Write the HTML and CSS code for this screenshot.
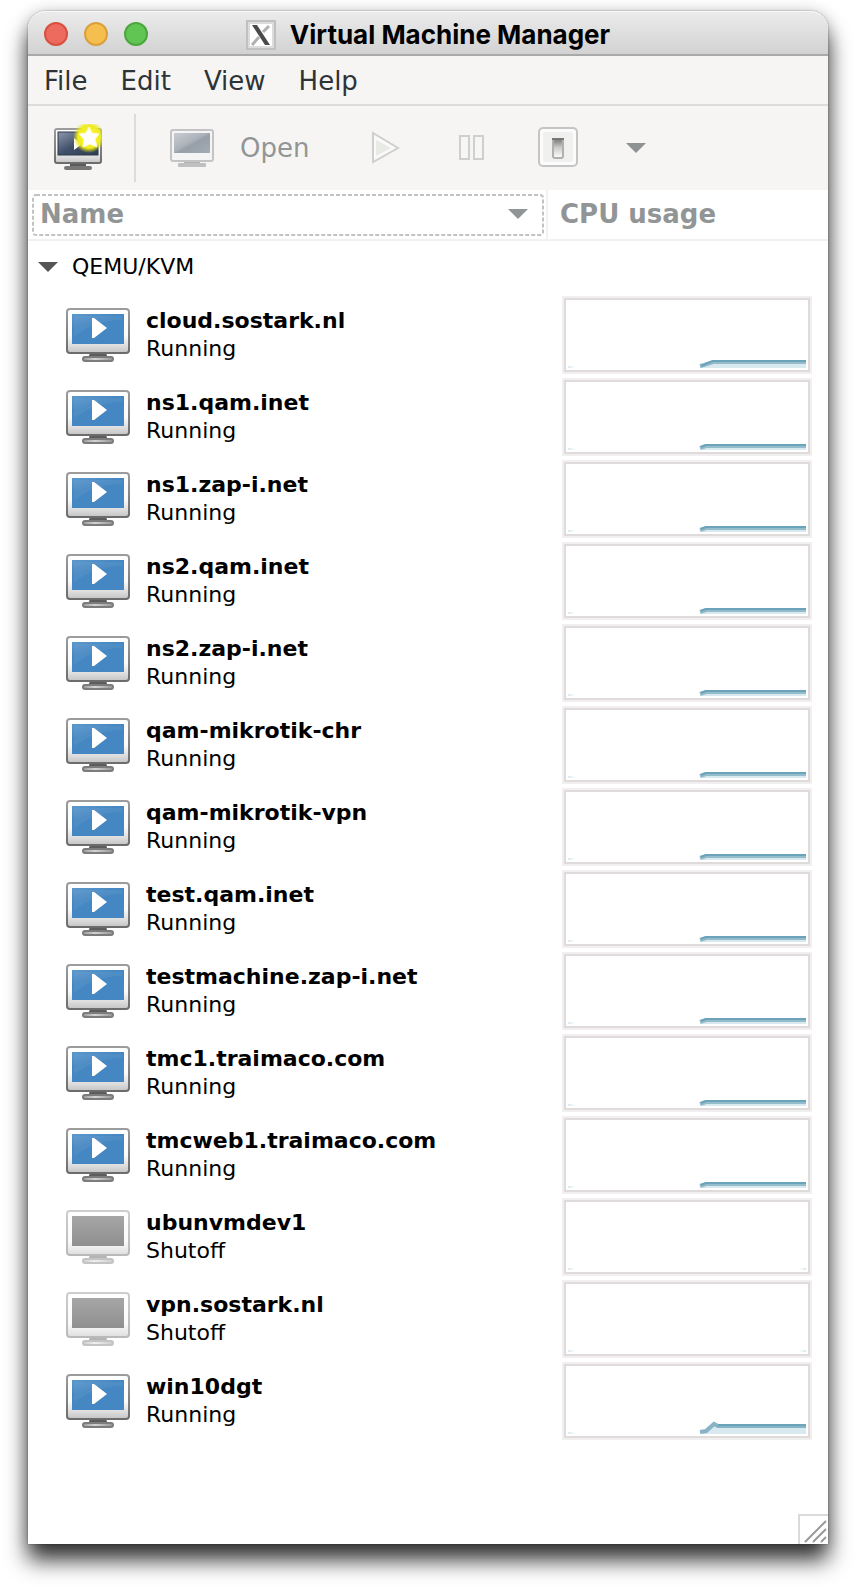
FILE: index.html
```html
<!DOCTYPE html>
<html lang="en">
<head>
<meta charset="utf-8">
<title>Virtual Machine Manager</title>
<link rel="stylesheet" href="styles.css">
</head>
<body>
<svg class="defs" aria-hidden="true">
  <defs>
    <linearGradient id="case" x1="0" y1="0" x2="0" y2="1"><stop offset="0" stop-color="#fff"/><stop offset=".6" stop-color="#fafafa"/><stop offset=".8" stop-color="#e2e2e2"/><stop offset="1" stop-color="#c4c4c4"/></linearGradient>
    <linearGradient id="caseEdge" x1="0" y1="0" x2="0" y2="1"><stop offset="0" stop-color="#9c9c9c"/><stop offset="1" stop-color="#6c6c6c"/></linearGradient>
    <linearGradient id="blue" x1="0" y1="0" x2=".5" y2="1"><stop offset="0" stop-color="#5c98cc"/><stop offset=".4" stop-color="#4587c2"/><stop offset="1" stop-color="#4587c2"/></linearGradient>
    <linearGradient id="gray" x1="0" y1="0" x2="0" y2="1"><stop offset="0" stop-color="#a6a6a6"/><stop offset="1" stop-color="#8f8f8f"/></linearGradient>
    <linearGradient id="offEdge" x1="0" y1="0" x2="0" y2="1"><stop offset="0" stop-color="#cdcdcd"/><stop offset="1" stop-color="#b9b9b9"/></linearGradient>
    <linearGradient id="offCase" x1="0" y1="0" x2="0" y2="1"><stop offset="0" stop-color="#fff"/><stop offset=".7" stop-color="#fafafa"/><stop offset="1" stop-color="#dedede"/></linearGradient>
    <linearGradient id="base" x1="0" y1="0" x2="1" y2="0"><stop offset="0" stop-color="#999"/><stop offset=".4" stop-color="#d4d4d4"/><stop offset="1" stop-color="#949494"/></linearGradient>
    <linearGradient id="offBase" x1="0" y1="0" x2="1" y2="0"><stop offset="0" stop-color="#ccc"/><stop offset=".4" stop-color="#f0f0f0"/><stop offset="1" stop-color="#ccc"/></linearGradient>
    <linearGradient id="navy" x1="0" y1="0" x2="1" y2="1"><stop offset="0" stop-color="#8d98ad"/><stop offset=".5" stop-color="#40506a"/><stop offset="1" stop-color="#2f3d51"/></linearGradient>
    <linearGradient id="haze" x1="0" y1="0" x2="1" y2="1"><stop offset="0" stop-color="#c9cdd2"/><stop offset=".45" stop-color="#acb2ba"/><stop offset=".55" stop-color="#979fa8"/><stop offset="1" stop-color="#a3abb5"/></linearGradient>
    <radialGradient id="glow"><stop offset="0" stop-color="#fff94a"/><stop offset=".7" stop-color="#efec1e"/><stop offset="1" stop-color="#e6e300" stop-opacity="0"/></radialGradient>
    <linearGradient id="well" x1="0" y1="0" x2="0" y2="1"><stop offset="0" stop-color="#777"/><stop offset=".45" stop-color="#ccc"/><stop offset="1" stop-color="#fff"/></linearGradient>
    <linearGradient id="fadeRight"><stop offset="0" stop-color="#d6e8f0"/><stop offset="1" stop-color="#fff"/></linearGradient>
    <linearGradient id="fadeLeft"><stop offset="0" stop-color="#fff"/><stop offset="1" stop-color="#d6e8f0"/></linearGradient>
    <symbol id="running" viewBox="0 0 64 54">
      <path d="M24 45H40L42 50H22Z" fill="#5c5c5c"/>
      <rect x="17" y="49" width="30" height="4" rx="2" fill="url(#base)" stroke="#7c7c7c" stroke-width="2"/>
      <rect x="1" y="1" width="62" height="44" rx="3" fill="url(#case)" stroke="url(#caseEdge)" stroke-width="2"/>
      <rect x="6" y="6" width="52" height="30" fill="url(#blue)"/>
      <path d="M8 8H56V12Q30 12 8 28Z" fill="#fff" opacity=".06"/>
      <path d="M26 10H28L41 20L28 30H26Z" fill="#fff"/>
    </symbol>
    <symbol id="shutoff" viewBox="0 0 64 54">
      <path d="M24 45H40L42 50H22Z" fill="#b4b4b4"/>
      <rect x="17" y="49" width="30" height="4" rx="2" fill="url(#offBase)" stroke="#c4c4c4" stroke-width="2"/>
      <rect x="1" y="1" width="62" height="44" rx="3" fill="url(#offCase)" stroke="url(#offEdge)" stroke-width="2"/>
      <rect x="6" y="6" width="52" height="30" fill="url(#gray)"/>
    </symbol>
    <symbol id="low" viewBox="0 0 250 78">
      <rect x="6" y="70" width="7" height="2" fill="url(#fadeRight)"/>
      <path d="M138 72L144 68H244V72Z" fill="#d9e9f0"/>
      <path d="M138 70L144 68H244" fill="none" stroke="#94bccb" stroke-width="4"/>
      <path d="M139 69L144 67H244" fill="none" stroke="#6ba3ba" stroke-width="2"/>
    </symbol>
    <symbol id="mid" viewBox="0 0 250 78">
      <rect x="6" y="70" width="7" height="2" fill="url(#fadeRight)"/>
      <path d="M138 72L151 66H244V72Z" fill="#d9e9f0"/>
      <path d="M138 70L142 69L151 66H244" fill="none" stroke="#94bccb" stroke-width="4"/>
      <path d="M139 70L151 65H244" fill="none" stroke="#6ba3ba" stroke-width="2"/>
    </symbol>
    <symbol id="peak" viewBox="0 0 250 78">
      <rect x="6" y="70" width="7" height="2" fill="url(#fadeRight)"/>
      <path d="M138 72L152 62L156 64H244V72Z" fill="#d9e9f0"/>
      <path d="M138 70L144 69L152 62L156 64H244" fill="none" stroke="#86b3c6" stroke-width="4"/>
      <path d="M156 63H244" fill="none" stroke="#6ba3ba" stroke-width="2"/>
    </symbol>
    <symbol id="idle" viewBox="0 0 250 78">
      <rect x="6" y="70" width="7" height="2" fill="url(#fadeRight)"/>
      <rect x="237" y="70" width="7" height="2" fill="url(#fadeLeft)"/>
    </symbol>
  </defs>
</svg>
<main class="window">
  <header class="titlebar">
    <div class="lights">
      <button class="light close" aria-label="Close"></button>
      <button class="light minimize" aria-label="Minimize"></button>
      <button class="light maximize" aria-label="Zoom"></button>
    </div>
    <h1 class="title">
      <svg width="30" height="30" viewBox="0 0 30 30" aria-hidden="true"><rect x="1" y="1" width="28" height="28" fill="#fff" stroke="#c0c0c0" stroke-width="2"/><rect x="3" y="3" width="24" height="24" fill="none" stroke="#dcdcdc" stroke-width="2"/><path d="M23 6L17 12M13 17L6 25" stroke="#b0b0b0" stroke-width="3"/><path d="M6 5H11L24 25H19Z" fill="#4a4a4a"/></svg>
      <span>Virtual Machine Manager</span>
    </h1>
  </header>
  <nav class="menubar">
    <button class="menu">File</button>
    <button class="menu">Edit</button>
    <button class="menu">View</button>
    <button class="menu">Help</button>
  </nav>
  <div class="toolbar">
    <button class="tool create" aria-label="Create a new virtual machine">
      <svg width="48" height="48" viewBox="0 0 48 48"><path d="M16 39H32V43H16Z" fill="#5a5a5a"/><rect x="10" y="42" width="28" height="4" rx="2" fill="#777"/><rect x="1" y="5" width="46" height="34" rx="2" fill="url(#case)" stroke="url(#caseEdge)" stroke-width="2"/><rect x="4" y="8" width="40" height="23" fill="url(#navy)" stroke="#2c394c"/><path d="M20 14V26L28 20Z" fill="#fff"/><circle cx="35" cy="13" r="16" fill="url(#glow)"/><path d="M35 3L38 9L45 10L41 15L43 23L36 20L29 23L30 15L25 10L32 9Z" fill="#fff" stroke="#fffbd0"/></svg>
    </button>
    <span class="divider"></span>
    <button class="tool open">
      <svg width="44" height="38" viewBox="0 0 44 38"><path d="M14 32H30V36H14Z" fill="#b4b4b4"/><rect x="8" y="34" width="28" height="4" rx="1" fill="#c0c0c0"/><rect x="1" y="1" width="42" height="31" rx="2" fill="#f4f4f4" stroke="#c4c4c4" stroke-width="2"/><rect x="4" y="4" width="36" height="20" fill="url(#haze)"/></svg>
      <span>Open</span>
    </button>
    <button class="tool play" aria-label="Run">
      <svg width="30" height="34" viewBox="0 0 30 34"><path d="M2 3L27 18L2 32Z" fill="#fafafa" stroke="#cfcfce" stroke-width="2"/><path d="M5 10L20 18L5 26Z" fill="#e8eae6"/></svg>
    </button>
    <button class="tool pause" aria-label="Pause">
      <svg width="28" height="28" viewBox="0 0 28 28"><rect x="2" y="3" width="9" height="23" fill="#f6f6f5" stroke="#cfcfce" stroke-width="2"/><rect x="16" y="3" width="9" height="23" fill="#f6f6f5" stroke="#cfcfce" stroke-width="2"/></svg>
    </button>
    <button class="tool power" aria-label="Shut down">
      <svg width="40" height="40" viewBox="0 0 40 40"><rect x="1" y="1" width="38" height="38" rx="4" fill="#fbfbfb" stroke="#c4c4c4" stroke-width="2"/><rect x="5" y="5" width="30" height="30" rx="2" fill="#f0f0ef"/><rect x="15" y="12" width="10" height="19" rx="2" fill="url(#well)" stroke="#b0b0b0" stroke-width="2"/><path d="M14 12H26" stroke="#777" stroke-width="2"/></svg>
    </button>
    <button class="tool more" aria-label="Shut down options">
      <svg width="20" height="10" viewBox="0 0 20 10"><path d="M0 0H20L10 10Z" fill="#8e9292"/></svg>
    </button>
  </div>
  <table class="machines">
    <thead>
      <tr>
        <th class="name-head"><button class="sort"><svg class="focus" aria-hidden="true"><rect class="focus-line" x="1" y="1" rx="3"/></svg><span>Name</span><svg width="20" height="10" viewBox="0 0 20 10" aria-hidden="true"><path d="M0 0H20L10 10Z" fill="#929595"/></svg></button></th>
        <th class="cpu-head">CPU usage</th>
      </tr>
    </thead>
    <tbody>
      <tr class="group"><td colspan="2"><button class="expander"><svg width="20" height="10" viewBox="0 0 20 10" aria-hidden="true"><path d="M0 0H20L10 10Z" fill="#555"/></svg><span>QEMU/KVM</span></button></td></tr>
    </tbody>
    <tbody id="rows"></tbody>
  </table>
  <div class="footer">
    <svg class="grip" width="30" height="30" viewBox="0 0 30 30" aria-hidden="true"><path d="M0 1H30M1 0V30" stroke="#dadada" stroke-width="2"/><path d="M7 28L28 7M15 28L28 15M23 28L28 23" stroke="#999" stroke-width="2"/></svg>
  </div>
</main>
<script src="script.js"></script>
</body>
</html>
```
FILE: script.js
```js
const machines = [
  ["cloud.sostark.nl", "Running", "mid"],
  ["ns1.qam.inet", "Running", "low"],
  ["ns1.zap-i.net", "Running", "low"],
  ["ns2.qam.inet", "Running", "low"],
  ["ns2.zap-i.net", "Running", "low"],
  ["qam-mikrotik-chr", "Running", "low"],
  ["qam-mikrotik-vpn", "Running", "low"],
  ["test.qam.inet", "Running", "low"],
  ["testmachine.zap-i.net", "Running", "low"],
  ["tmc1.traimaco.com", "Running", "low"],
  ["tmcweb1.traimaco.com", "Running", "low"],
  ["ubunvmdev1", "Shutoff", "idle"],
  ["vpn.sostark.nl", "Shutoff", "idle"],
  ["win10dgt", "Running", "peak"]
];

document.getElementById("rows").innerHTML = machines.map(([name, state, load]) => `
  <tr>
    <td><div class="machine">
      <svg width="64" height="54" aria-hidden="true"><use href="#${state.toLowerCase()}"/></svg>
      <div><div class="machine-name">${name}</div><div>${state}</div></div>
    </div></td>
    <td class="cpu"><svg class="graph" viewBox="0 0 250 78" role="img" aria-label="CPU usage of ${name}"><rect x="1" y="1" width="248" height="76" fill="#fff" stroke="#f1efef" stroke-width="2"/><rect x="3" y="3" width="244" height="72" fill="none" stroke="#dfdbdb" stroke-width="2"/><use href="#${load}"/></svg></td>
  </tr>`).join("");
```
FILE: styles.css
```css
* { box-sizing: border-box; }

body {
  margin: 0;
  padding: 11px 28px 44px;
  background: #fff;
  color: #000;
  font: 22px/28px "DejaVu Sans", sans-serif;
}

button {
  margin: 0;
  padding: 0;
  border: 0;
  background: none;
  color: inherit;
  font: inherit;
}

svg { display: block; flex: none; }

.defs { position: absolute; width: 0; height: 0; }

.window {
  background: #fff;
  border-radius: 18px 18px 0 0;
  box-shadow: 0 0 2px rgba(0, 0, 0, .4), 0 0 16px rgba(0, 0, 0, .15), 0 16px 22px rgba(0, 0, 0, .8);
}

.titlebar {
  display: grid;
  grid-template-columns: 1fr auto 1fr;
  align-items: center;
  height: 45px;
  padding: 2px 16px 0;
  border-bottom: 2px solid #a9a9a9;
  border-radius: 18px 18px 0 0;
  background: linear-gradient(#ececec, #d2d2d2);
  box-shadow: inset 0 1px 0 #f7f7f7;
}

.lights { display: flex; gap: 16px; }
.light { width: 24px; height: 24px; border: 2px solid; border-radius: 50%; }
.close { background: #ed6a5e; border-color: #d8503f; }
.minimize { background: #f5bf4f; border-color: #d9a03c; }
.maximize { background: #61c554; border-color: #4ca73a; }

.title {
  display: flex;
  align-items: center;
  gap: 14px;
  margin: 0;
  padding-top: 3px;
  font: bold 26px/32px Inter, sans-serif;
}

.menubar {
  display: flex;
  gap: 33px;
  padding: 2px 16px 0;
  border-bottom: 2px solid #dcdcda;
  background: #f6f5f4;
  color: #2e3436;
  font-size: 26px;
  line-height: 46px;
}

.toolbar {
  display: flex;
  align-items: center;
  height: 84px;
  padding: 0 26px;
  background: #f6f5f4;
  color: #929595;
  font-size: 26px;
}

.divider { width: 2px; height: 68px; margin: 0 34px 0 32px; background: #dcdcda; }
.open { display: flex; align-items: center; gap: 26px; }
.play { margin-left: 62px; }
.pause { margin-left: 57px; }
.power { margin-left: 52px; }
.more { margin-left: 48px; }
.play, .pause, .power { padding-bottom: 2px; }

.machines { width: 100%; border-collapse: collapse; table-layout: fixed; }
.machines th, .machines td { padding: 0; text-align: left; }
.machines th { height: 50px; border-bottom: 2px solid #f2f2f1; color: #929595; font-size: 26px; }
.machines .name-head { padding: 2px 2px 2px 4px; border-right: 2px solid #f2f2f1; }
.machines .cpu-head { width: 281px; padding: 0 14px 1px 12px; }

.sort {
  position: relative;
  display: flex;
  align-items: center;
  justify-content: space-between;
  width: 100%;
  height: 42px;
  padding: 0 16px 1px 8px;
}

/* Keyboard focus ring drawn over the column header */
.focus { position: absolute; inset: 0; width: 100%; height: 100%; }
.focus-line { width: calc(100% - 2px); height: calc(100% - 2px); fill: none; stroke: #c2c2c2; stroke-width: 2px; stroke-dasharray: 4 2; }

.group td { height: 54px; }
.expander { display: flex; align-items: center; gap: 14px; padding: 0 10px 2px; }

.machines tbody tr:not(.group) { height: 82px; }
.machine { display: flex; align-items: center; gap: 16px; padding-left: 38px; }
.machine-name { font-weight: bold; }
.machines .cpu { padding: 2px 16px 2px 15px; }
.graph { width: 100%; }

.footer { display: flex; align-items: flex-end; justify-content: flex-end; height: 102px; }
```
